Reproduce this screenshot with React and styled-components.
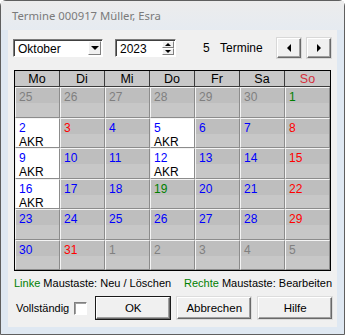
import styled, { createGlobalStyle } from 'styled-components'

const GlobalStyle = createGlobalStyle`
  html, body {
    margin: 0;
    padding: 0;
    background: #fff;
  }
  * {
    box-sizing: border-box;
  }
`

const COLORS = {
  weekday: '#0000ff',
  holiday: '#ff0000',
  special: '#008000',
  other: '#808080',
}

// day, colour key, has appointment
const WEEKS = [
  [[25, 'other'], [26, 'other'], [27, 'other'], [28, 'other'], [29, 'other'], [30, 'other'], [1, 'special']],
  [[2, 'weekday', true], [3, 'holiday'], [4, 'weekday'], [5, 'weekday', true], [6, 'weekday'], [7, 'weekday'], [8, 'holiday']],
  [[9, 'weekday', true], [10, 'weekday'], [11, 'weekday'], [12, 'weekday', true], [13, 'weekday'], [14, 'weekday'], [15, 'holiday']],
  [[16, 'weekday', true], [17, 'weekday'], [18, 'weekday'], [19, 'special'], [20, 'weekday'], [21, 'weekday'], [22, 'holiday']],
  [[23, 'weekday'], [24, 'weekday'], [25, 'weekday'], [26, 'weekday'], [27, 'weekday'], [28, 'weekday'], [29, 'holiday']],
  [[30, 'weekday'], [31, 'holiday'], [1, 'other'], [2, 'other'], [3, 'other'], [4, 'other'], [5, 'other']],
]

const DAYS = ['Mo', 'Di', 'Mi', 'Do', 'Fr', 'Sa', 'So']

const Window = styled.div`
  width: 345px;
  height: 335px;
  display: flex;
  flex-direction: column;
  border: 1px solid #5f5f5f;
  border-radius: 6px 6px 0 0;
  background: #dfe8f2;
  font-family: 'Liberation Sans', Arial, sans-serif;
  font-size: 11px;
  color: #000;
`

const TitleBar = styled.div`
  height: 29px;
  flex-shrink: 0;
  display: flex;
  align-items: center;
  padding: 0 0 0 11px;
  font-family: 'Noto Sans', 'Open Sans', sans-serif;
  font-size: 11.3px;
  color: #7a7a7a;
  background: linear-gradient(180deg, #ececec 0%, #e6ebf1 100%);
`

const Client = styled.div`
  flex: 1;
  margin: 0 7px 7px 7px;
  background: #f0f0f0;
  display: flex;
  flex-direction: column;
  padding: 8px 5px 0 5px;
`

const Toolbar = styled.div`
  display: flex;
  align-items: center;
  height: 20px;
  padding-right: 1px;
`

const Sunken = styled.div`
  display: flex;
  align-items: center;
  height: 18px;
  width: ${p => p.width}px;
  margin-right: ${p => p.gap || 0}px;
  background: #fff;
  border: 1px solid;
  border-color: #7a7a7a #fff #fff #7a7a7a;
  box-shadow: inset 1px 1px 0 #404040;
  padding: 0 1px 0 4px;
`

const FieldText = styled.span`
  flex: 1;
  font-size: 12px;
  line-height: 14px;
  padding-top: 1px;
`

const DropButton = styled.div`
  width: 13px;
  height: 14px;
  display: flex;
  align-items: center;
  justify-content: center;
  background: #f0f0f0;
  border: 1px solid;
  border-color: #fff #808080 #808080 #fff;
`

const Spinner = styled.div`
  width: 12px;
  height: 14px;
  display: flex;
  flex-direction: column;
`

const SpinHalf = styled.div`
  flex: 1;
  display: flex;
  align-items: center;
  justify-content: center;
  background: #f0f0f0;
  border: 1px solid;
  border-color: #fff #808080 #808080 #fff;
`

const Count = styled.span`
  margin-left: 27px;
  width: 17px;
  font-size: 12px;
`

const CountLabel = styled.span`
  font-size: 12px;
  flex: 1;
`

const NavButton = styled.button`
  width: 24px;
  height: 20px;
  flex-shrink: 0;
  margin-left: ${p => p.gap || 0}px;
  padding: 0;
  display: flex;
  align-items: center;
  justify-content: center;
  background: #f0f0f0;
  border: 1px solid;
  border-color: #fff #696969 #696969 #fff;
  box-shadow: inset -1px -1px 0 #a0a0a0;
  outline: 1px solid #d8d8d8;
`

const Grid = styled.div`
  margin: 12px 1px 0 1px;
  height: 201px;
  display: grid;
  grid-template-columns: repeat(7, 1fr);
  grid-template-rows: 16px repeat(6, 1fr);
  border: 1px solid #000;
  box-shadow: inset 1px 1px 0 #505050;
  background: #c4c4c4;
`

const HeadCell = styled.div`
  display: flex;
  align-items: center;
  justify-content: center;
  background: #c8c8c8;
  border-right: 1px solid #3c3c3c;
  border-bottom: 1px solid #3c3c3c;
  font-size: 12.5px;
  line-height: 14px;
  color: ${p => (p.sunday ? '#d4303c' : '#000')};
  &:nth-child(7) {
    border-right: none;
  }
`

const DayCell = styled.div`
  display: flex;
  flex-direction: column;
  padding: 2px 0 0 3px;
  border-top: 1px solid #f4f4f4;
  border-left: 1px solid #f4f4f4;
  border-right: 1px solid #8c8c8c;
  border-bottom: 1px solid #8c8c8c;
  background: ${p =>
    p.booked ? '#fff' : 'linear-gradient(180deg, #bebebe 0 15px, #c7c7c7 15px)'};
  font-size: 12px;
  line-height: 14px;
  overflow: hidden;
`

const DayNum = styled.span`
  color: ${p => COLORS[p.tone]};
`

const Booking = styled.span`
  color: #000;
`

const Legend = styled.div`
  display: flex;
  justify-content: space-between;
  padding: 6px 0 0 1px;
  font-size: 11px;
  height: 24px;
  white-space: nowrap;
`

const Hint = styled.span`
  color: #000;
`

const Mouse = styled.span`
  color: #008000;
`

const Footer = styled.div`
  display: flex;
  align-items: center;
  padding: 2px 0 0 3px;
`

const CheckLabel = styled.span`
  font-size: 11px;
  margin-right: 5px;
  white-space: nowrap;
`

const CheckBox = styled.span`
  width: 13px;
  height: 13px;
  flex-shrink: 0;
  background: #fff;
  border: 1px solid;
  border-color: #808080 #fff #fff #808080;
  box-shadow: inset 1px 1px 0 #a0a0a0;
  margin-right: 9px;
`

const Button = styled.button`
  width: 74px;
  height: 22px;
  flex-shrink: 0;
  margin-right: ${p => p.gap || 0}px;
  padding: 0;
  font-family: 'Liberation Sans', Arial, sans-serif;
  font-size: 11.5px;
  color: #000;
  background: #f0f0f0;
  border: 1px solid;
  border-color: #fff #696969 #696969 #fff;
  box-shadow: inset -1px -1px 0 #a0a0a0;
  outline: ${p => (p.primary ? '1px solid #1a1a1a' : '1px solid #dcdcdc')};
`

const Arrow = ({ dir, size = 4 }) => {
  const s = size
  const paths = {
    down: `M0 0 L${s * 2} 0 L${s} ${s} Z`,
    up: `M0 ${s} L${s * 2} ${s} L${s} 0 Z`,
    left: `M${s} 0 L${s} ${s * 2} L0 ${s} Z`,
    right: `M0 0 L0 ${s * 2} L${s} ${s} Z`,
  }
  const vertical = dir === 'up' || dir === 'down'
  return (
    <svg width={vertical ? s * 2 : s} height={vertical ? s : s * 2} style={{ display: 'block' }}>
      <path d={paths[dir]} fill="#000" />
    </svg>
  )
}

export default function App() {
  return (
    <>
      <GlobalStyle />
      <Window>
        <TitleBar>Termine 000917 Müller, Esra</TitleBar>
        <Client>
          <Toolbar>
            <Sunken width={90} gap={12}>
              <FieldText>Oktober</FieldText>
              <DropButton>
                <Arrow dir="down" size={4} />
              </DropButton>
            </Sunken>
            <Sunken width={61}>
              <FieldText>2023</FieldText>
              <Spinner>
                <SpinHalf>
                  <Arrow dir="up" size={3} />
                </SpinHalf>
                <SpinHalf>
                  <Arrow dir="down" size={3} />
                </SpinHalf>
              </Spinner>
            </Sunken>
            <Count>5</Count>
            <CountLabel>Termine</CountLabel>
            <NavButton>
              <Arrow dir="left" size={4} />
            </NavButton>
            <NavButton gap={6}>
              <Arrow dir="right" size={4} />
            </NavButton>
          </Toolbar>

          <Grid>
            {DAYS.map(d => (
              <HeadCell key={d} sunday={d === 'So'}>
                {d}
              </HeadCell>
            ))}
            {WEEKS.flat().map(([day, tone, booked], idx) => (
              <DayCell key={idx} booked={booked}>
                <DayNum tone={tone}>{day}</DayNum>
                {booked && <Booking>AKR</Booking>}
              </DayCell>
            ))}
          </Grid>

          <Legend>
            <Hint>
              <Mouse>Linke</Mouse> Maustaste: Neu / Löschen
            </Hint>
            <Hint>
              <Mouse>Rechte</Mouse> Maustaste: Bearbeiten
            </Hint>
          </Legend>

          <Footer>
            <CheckLabel>Vollständig</CheckLabel>
            <CheckBox />
            <Button primary gap={7}>OK</Button>
            <Button gap={7}>Abbrechen</Button>
            <Button>Hilfe</Button>
          </Footer>
        </Client>
      </Window>
    </>
  )
}
